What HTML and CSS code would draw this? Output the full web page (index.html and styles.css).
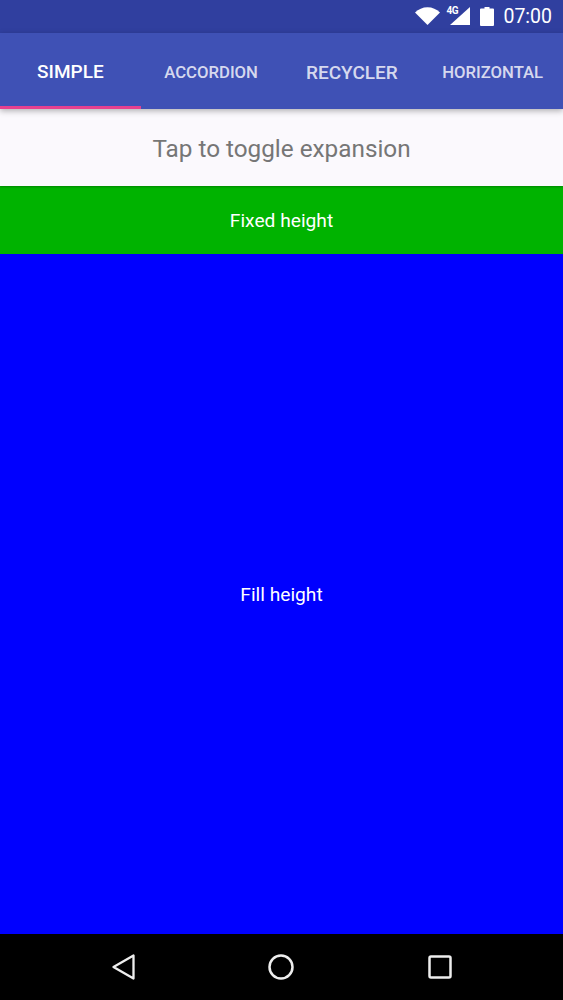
FILE: index.html
```html
<!DOCTYPE html>
<html lang="en">
<head>
<meta charset="utf-8">
<title>Expandable layout</title>
<link rel="stylesheet" href="styles.css">
</head>
<body>
<div class="app">
  <header class="status">
    <svg class="ic-wifi" viewBox="0 0 25 18"><path d="M0 5.500C3.500 2.200 7.700.2 12.500.2S21.500 2.200 25 5.500L12.500 18z" fill="#fff"/></svg>
    <div class="signal">
      <span class="net">4G</span>
      <svg class="ic-signal" viewBox="0 0 20 18"><path d="M20 0v18H0z" fill="#fff"/></svg>
    </div>
    <svg class="ic-battery" viewBox="0 0 14 19"><path d="M4.500 0h5v1.500h3.500a1 1 0 0 1 1 1V18a1 1 0 0 1-1 1H1a1 1 0 0 1-1-1V2.500a1 1 0 0 1 1-1h3.500z" fill="#fff"/></svg>
    <span class="clock">07:00</span>
  </header>
  <nav class="tabs">
    <div class="tab tab-active tab-l">SIMPLE</div>
    <div class="tab tab-s">ACCORDION</div>
    <div class="tab tab-l">RECYCLER</div>
    <div class="tab tab-s">HORIZONTAL</div>
  </nav>
  <div class="toggle">Tap to toggle expansion</div>
  <div class="fixed">Fixed height</div>
  <div class="fill">Fill height</div>
  <footer class="nav">
    <svg class="ic-back" viewBox="0 0 23 26"><path d="M21.500 1.500V24.500L1.500 13z" fill="none" stroke="#eee" stroke-width="2.300" stroke-linejoin="round"/></svg>
    <svg class="ic-home" viewBox="0 0 26 26"><circle cx="13" cy="13" r="11.500" fill="none" stroke="#eee" stroke-width="2.500"/></svg>
    <svg class="ic-recent" viewBox="0 0 24 24"><rect x="1.500" y="1.500" width="21" height="21" rx="1.500" fill="none" stroke="#eee" stroke-width="2.500"/></svg>
  </footer>
</div>
</body>
</html>
```

FILE: styles.css
```css
* { box-sizing: border-box; }
html, body { margin: 0; padding: 0; }
body { font-family: Roboto, "Noto Sans", sans-serif; background: #00f; }
.app { width: 563px; height: 1000px; display: flex; flex-direction: column; overflow: hidden; }

.status { height: 33px; flex: none; background: #303f9f; color: #fff; display: flex; align-items: center; justify-content: flex-end; padding-right: 11px; }
.ic-wifi { width: 25px; height: 18px; margin-right: 6px; margin-bottom: 1px; }
.signal { position: relative; width: 24px; height: 18px; margin-right: 10px; margin-bottom: 1px; }
.net { position: absolute; left: 0; top: -1px; font-size: 10px; line-height: 10px; font-weight: 700; letter-spacing: -.3px; }
.ic-signal { position: absolute; right: 0; bottom: 0; width: 20px; height: 18px; }
.ic-battery { width: 14px; height: 19px; margin-right: 9px; margin-bottom: 1px; }
.clock { font-size: 19.500px; line-height: 20px; }

.tabs { height: 76px; flex: none; background: #3f51b5; display: flex; position: relative; z-index: 2; box-shadow: 0 2px 6px rgba(0,0,0,.3); }
.tab { flex: 1 1 25%; display: flex; align-items: center; justify-content: center; color: rgba(255,255,255,.8); font-weight: 500; padding-top: 2px; }
.tab-l { font-size: 19px; }
.tab-s { font-size: 16.700px; }
.tab-active { color: #fff; padding-top: 3px; border-bottom: 3px solid #e6408f; }

.toggle { height: 77px; flex: none; background: #fbf9fd; color: #767676; font-size: 24.300px; padding-top: 2px; display: flex; align-items: center; justify-content: center; position: relative; z-index: 1; box-shadow: 0 1px 2px rgba(0,0,0,.25); }
.fixed { height: 68px; flex: none; background: #00b300; color: #fff; font-size: 19.200px; padding-top: 1px; display: flex; align-items: center; justify-content: center; }
.fill { flex: 1; background: #00f; color: #fff; font-size: 19.200px; display: flex; align-items: center; justify-content: center; }

.nav { height: 66px; flex: none; background: #000; display: grid; grid-template-columns: repeat(3, 1fr); padding: 0 44px; align-items: center; justify-items: center; }
.ic-back { width: 23px; height: 26px; }
.ic-home { width: 26px; height: 26px; }
.ic-recent { width: 24px; height: 24px; }
```
